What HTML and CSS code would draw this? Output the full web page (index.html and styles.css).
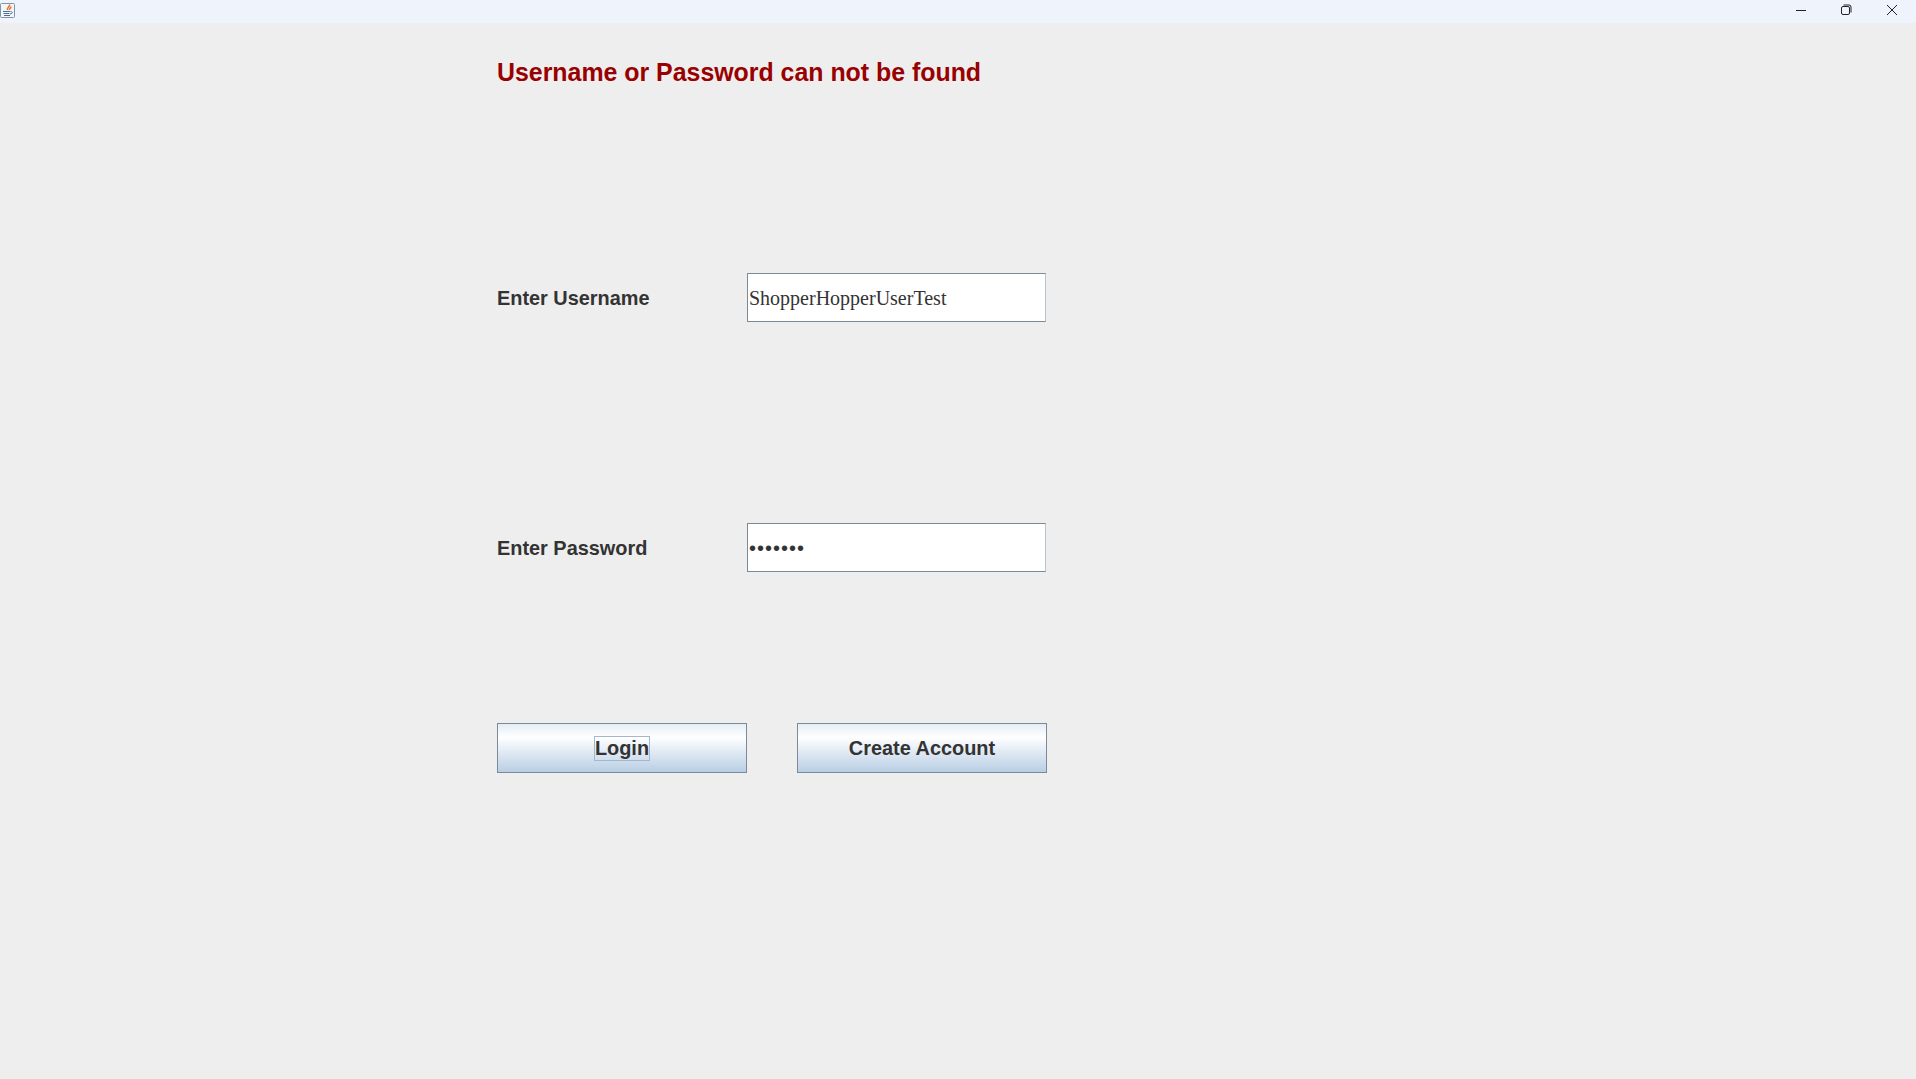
FILE: index.html
```html
<!DOCTYPE html>
<html lang="en">
<head>
    <meta charset="UTF-8">
    <meta name="viewport" content="width=device-width, initial-scale=1.0">
    <title>Login</title>
    <link rel="stylesheet" href="styles.css">
</head>
<body>
    <div class="title-bar">
        <svg class="app-icon" width="15" height="16" viewBox="0 0 15 16">
            <rect x="0.5" y="1.5" width="14" height="14" rx="1" fill="#f3f5f8" stroke="#7f93ab"/>
            <path d="M9.500 2.500c1 2-3 3-2 5.500M11 4.500c0 2-2 2-1.500 3.500" fill="none" stroke="#e8701a" stroke-width="1.500"/>
            <path d="M3 9.500h7M3.500 11.500h6M4 13.500h6M10.500 9.500c2.500 0 2.500 2-.5 2.500" fill="none" stroke="#4a6f94" stroke-width="1"/>
        </svg>
        <div class="window-controls">
            <svg class="control" width="12" height="12" viewBox="0 0 12 12">
                <path d="M1 6.500h10" fill="none" stroke="#222" stroke-width="1"/>
            </svg>
            <svg class="control" width="12" height="12" viewBox="0 0 12 12">
                <rect x="1.500" y="2.500" width="8" height="8" rx="1.500" fill="none" stroke="#222"/>
                <path d="M3.500 1h5.500a2 2 0 0 1 2 2v5.500" fill="none" stroke="#222"/>
            </svg>
            <svg class="control close-control" width="12" height="12" viewBox="0 0 12 12">
                <path d="M1 1l10 10M11 1L1 11" fill="none" stroke="#222" stroke-width="1"/>
            </svg>
        </div>
    </div>

    <div class="container">
        <h1 class="error-message">Username or Password can not be found</h1>

        <div class="form-row username-row">
            <label class="field-label" for="username">Enter Username</label>
            <div class="text-field" id="username">ShopperHopperUserTest</div>
        </div>

        <div class="form-row password-row">
            <label class="field-label" for="password">Enter Password</label>
            <div class="text-field password-field" id="password">•••••••</div>
        </div>

        <div class="button-row">
            <button class="action-button" type="button"><span class="focused">Login</span></button>
            <button class="action-button" type="button">Create Account</button>
        </div>
    </div>
</body>
</html>
```

FILE: styles.css
```css
body {
    font-family: "Liberation Sans", Arial, sans-serif;
    background-color: #eeeeee;
    color: #333333;
    margin: 0;
    padding: 0;
    height: 1079px;
    overflow: hidden;
}

.title-bar {
    display: flex;
    justify-content: space-between;
    height: 23px;
    background-color: #eff3fb;
}

.app-icon {
    display: block;
    margin-top: 2px;
}

.window-controls {
    display: flex;
    gap: 33px;
    padding: 4px 18px 0 0;
}

.control {
    display: block;
}

.close-control {
    margin-left: 1px;
}

.container {
    padding-left: 497px;
}

.error-message {
    margin: 0;
    padding-top: 35px;
    height: 28px;
    line-height: 28px;
    font-size: 24.900px;
    font-weight: bold;
    color: #990000;
}

.form-row {
    display: flex;
    align-items: center;
    height: 50px;
}

.username-row {
    margin-top: 187px;
}

.password-row {
    margin-top: 200px;
}

.field-label {
    width: 250px;
    font-size: 19.900px;
    font-weight: bold;
}

.text-field {
    box-sizing: border-box;
    align-self: flex-start;
    width: 299px;
    height: 49px;
    padding: 1px 1px 0;
    background-color: white;
    border: 1px solid #7a8a99;
    border-right-color: #b8c4d0;
    font-family: "Liberation Serif", "Times New Roman", serif;
    font-size: 20px;
    line-height: 46px;
}

.password-field {
    font-family: "Liberation Sans", Arial, sans-serif;
    font-size: 20px;
    letter-spacing: 1px;
}

.button-row {
    display: flex;
    gap: 50px;
    margin-top: 150px;
}

.action-button {
    box-sizing: border-box;
    width: 250px;
    height: 50px;
    padding: 0;
    border: 1px solid #7a8a9a;
    background: linear-gradient(#e4edf6 0%, #ffffff 28%, #e6eef6 52%, #b9cee4 100%);
    font-family: "Liberation Sans", Arial, sans-serif;
    font-size: 19.900px;
    font-weight: bold;
    color: #333333;
}

.focused {
    display: inline-block;
    padding: 0;
    line-height: 23px;
    border: 1px solid #a3b8cc;
}
```
